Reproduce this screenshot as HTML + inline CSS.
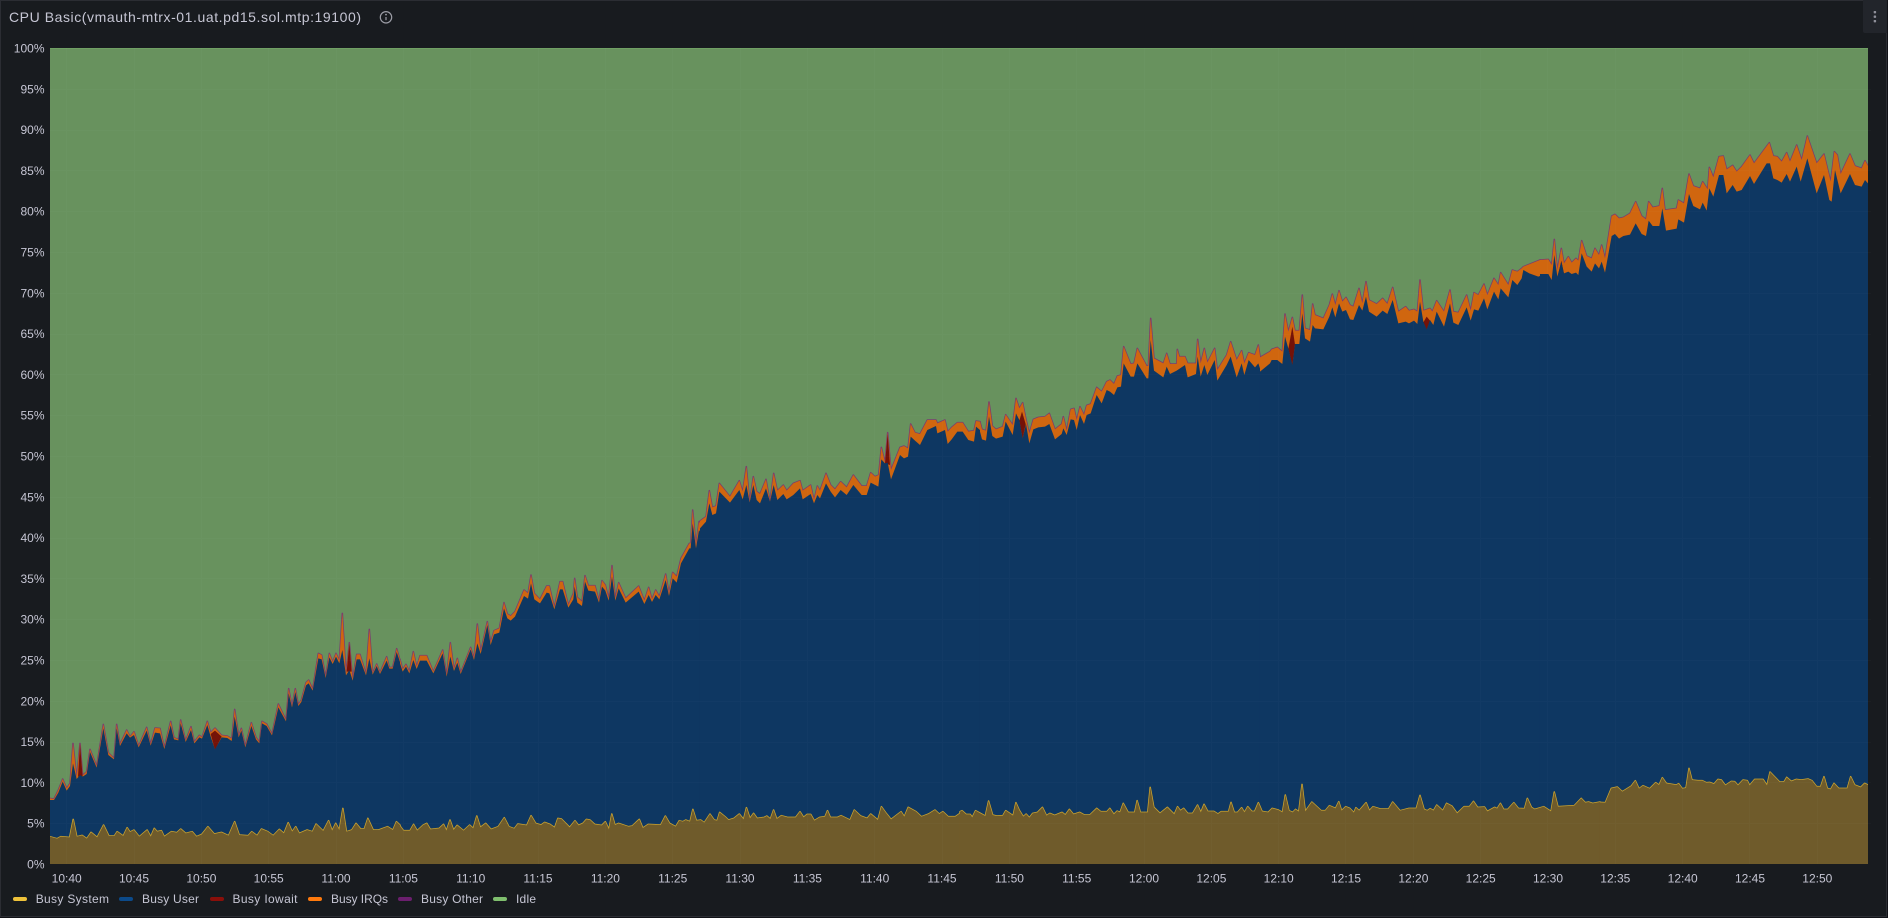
<!DOCTYPE html>
<html>
<head>
<meta charset="utf-8">
<style>
html,body{margin:0;padding:0;width:1888px;height:918px;overflow:hidden;background:#111217}
svg{display:block}
.v{vector-effect:non-scaling-stroke}
text{font-family:"Liberation Sans",sans-serif;fill:#c6c6d4;font-size:12px}
</style>
</head>
<body>
<svg width="1888" height="918" viewBox="0 0 1888 918" xmlns="http://www.w3.org/2000/svg">
<defs>
<clipPath id="plot"><rect x="50" y="48" width="1818" height="816"/></clipPath>
<polygon id="ta" class="v" transform="translate(40 600) scale(.33333)" points="30,840 30,595 42,597 55,570 68,537 80,565 90,550 99,430 110,533 120,430 128,526 140,515 150,448 170,498 190,373 205,458 222,475 230,373 240,433 260,390 270,410 282,395 296,438 320,382 332,433 345,384 360,385 373,443 392,364 402,413 415,418 422,360 437,422 453,380 463,426 478,406 486,412 502,364 512,398 525,384 545,406 562,408 575,416 584,328 596,408 604,385 616,438 634,368 648,412 658,426 666,364 680,372 696,402 715,312 738,360 746,266 756,318 766,266 775,314 784,300 798,248 806,240 818,268 835,160 845,165 857,230 868,160 878,186 888,160 898,182 907,40 918,222 928,128 938,238 950,163 960,163 978,222 988,88 998,220 1010,192 1020,218 1040,170 1048,202 1058,202 1070,146 1080,180 1080,840"/>
<polygon id="tb" class="v" transform="translate(400 510) scale(.33333)" points="0,1110 0,448 8,478 18,463 28,485 40,425 50,470 60,437 80,437 100,485 128,420 140,495 151,398 162,478 172,445 182,488 212,412 222,445 232,342 242,425 262,335 272,398 282,362 298,355 312,278 322,312 332,318 345,305 372,240 384,250 393,195 403,250 420,268 440,228 448,228 463,292 480,215 488,215 505,285 520,250 524,205 532,262 546,275 555,197 565,227 585,227 597,272 606,212 616,225 626,265 636,167 646,265 656,218 677,265 716,228 733,272 746,232 756,268 767,240 778,260 797,192 807,250 818,187 830,200 843,145 868,100 872,100 878,0 888,105 897,35 900,40 900,1110"/>
<polygon id="tc" class="v" transform="translate(680 420) scale(.33333)" points="60,1380 60,303 78,290 88,212 97,262 108,258 118,190 150,230 178,182 188,215 199,140 209,245 220,170 230,215 240,222 258,178 270,245 281,160 292,212 310,195 320,212 340,190 360,182 368,212 392,195 402,240 412,198 420,212 438,160 452,195 465,208 482,185 500,202 520,165 545,198 560,198 572,158 585,170 596,165 604,82 615,128 623,38 633,150 660,82 672,78 684,85 692,12 705,38 720,42 742,0 768,0 772,10 795,0 803,35 815,22 832,8 848,8 865,35 882,32 888,3 900,5 900,1380"/>
<polygon id="td" class="v" transform="translate(960 300) scale(.33333)" points="60,1740 60,365 66,388 78,392 87,306 97,378 108,388 128,380 137,344 158,375 168,295 178,325 188,308 198,358 208,400 220,358 235,352 255,350 268,340 285,388 305,372 310,350 320,392 332,328 342,325 350,360 360,320 372,345 380,316 392,312 410,262 425,275 440,245 450,240 462,252 472,228 483,225 491,140 512,192 522,190 532,145 560,198 565,198 572,55 582,175 610,190 620,160 630,192 650,192 652,148 658,170 675,170 683,190 708,190 713,118 722,190 733,145 742,188 764,145 772,210 800,165 812,125 830,180 845,152 853,190 866,158 885,165 895,135 900,168 900,1740"/>
<polygon id="te" class="v" transform="translate(1260 270) scale(.33333)" points="0,1830 0,262 30,245 35,238 52,232 67,245 75,132 85,185 97,142 105,182 118,182 127,75 135,175 150,180 158,102 165,135 190,145 208,105 217,72 226,105 237,62 247,95 258,82 270,105 280,110 297,55 307,100 318,35 327,90 350,102 368,85 382,102 398,52 415,125 437,110 447,122 462,118 472,125 480,30 490,122 510,115 517,125 530,92 552,125 570,60 580,125 595,128 620,75 632,122 642,68 655,75 672,42 682,75 702,25 715,45 722,8 745,45 757,0 772,5 785,-5 790,-10 840,-30 840,1830"/>
<polygon id="tf" class="v" transform="translate(1540 130) scale(.33333)" points="0,2250 0,390 25,388 35,405 43,328 52,420 64,355 72,400 85,380 95,398 108,385 115,392 125,332 140,378 155,385 165,355 177,375 185,345 195,385 215,258 225,253 237,265 250,262 270,250 287,215 305,258 318,268 326,215 338,232 358,228 367,175 375,240 410,235 415,210 432,220 447,132 460,168 480,175 488,155 503,178 508,112 520,142 537,80 550,78 560,118 578,106 590,125 605,110 630,75 642,100 688,38 700,78 712,80 725,95 740,68 750,95 770,45 785,90 802,18 830,100 852,72 872,155 883,65 892,75 902,132 930,72 945,108 965,115 975,92 984,108 984,2250"/>
<polygon id="s1" class="v" transform="translate(0 780) scale(.35714 .33333)" points="140,300 140,170 160,176 170,170 195,172 205,118 215,170 230,166 243,176 255,157 272,172 290,135 305,168 320,168 328,155 345,168 356,143 364,156 375,150 390,170 412,150 422,170 432,145 440,155 452,152 460,170 480,155 495,158 506,147 520,160 538,155 550,170 565,163 582,140 600,162 620,157 640,167 657,125 670,165 695,167 705,155 720,167 732,147 750,155 765,167 782,148 795,160 807,128 818,155 828,140 838,160 860,150 875,155 885,132 905,153 920,122 930,152 940,130 950,150 960,85 970,155 985,150 997,130 1010,147 1020,147 1030,115 1045,150 1060,150 1085,140 1100,150 1110,125 1120,135 1120,300"/>
<polygon id="s2" class="v" transform="translate(400 790) scale(.35714 .33333)" points="0,270 0,108 10,122 28,122 38,103 48,122 65,105 75,100 85,118 110,115 122,103 130,122 140,90 150,120 160,106 178,122 195,105 205,115 215,78 225,112 240,100 255,118 275,110 292,83 305,110 320,116 330,102 355,106 367,77 380,100 395,105 405,97 420,103 433,113 442,85 452,87 475,112 490,92 500,106 512,100 522,88 532,90 545,103 565,106 575,95 585,118 593,72 602,105 612,100 640,110 650,108 670,88 680,114 695,103 730,105 743,78 755,100 772,110 782,92 792,95 800,90 812,95 820,58 830,92 842,90 852,98 868,72 880,90 888,92 895,67 910,80 920,90 935,85 950,72 962,88 970,53 980,85 990,70 1000,85 1020,82 1027,78 1037,87 1046,60 1055,87 1068,77 1085,82 1108,82 1120,65 1130,82 1140,73 1150,73 1160,92 1175,82 1190,80 1197,62 1205,82 1225,82 1235,77 1260,90 1272,60 1290,78 1308,85 1318,72 1338,90 1348,50 1360,68 1375,88 1403,65 1412,80 1423,52 1445,65 1460,80 1480,72 1498,60 1510,72 1520,65 1535,80 1555,80 1568,70 1568,270"/>
<polygon id="s3" class="v" transform="translate(960 770) scale(.40816 .33333)" points="0,330 0,125 5,122 15,133 25,133 30,142 38,122 50,130 62,138 70,93 80,135 90,138 105,137 112,122 130,137 137,98 145,120 155,140 162,132 170,143 178,130 190,127 202,112 212,137 220,130 232,136 250,127 258,135 268,118 278,133 293,127 305,135 318,135 335,115 345,125 360,125 367,115 377,133 385,123 392,127 400,100 412,127 428,127 434,92 442,127 460,127 466,52 475,112 490,130 508,112 525,133 533,110 540,122 548,115 558,130 570,130 582,105 590,127 598,103 607,124 622,124 632,132 640,125 658,125 664,97 672,127 680,127 690,113 697,127 705,110 715,124 722,124 731,98 740,124 755,127 765,115 780,120 790,127 797,75 806,122 815,127 822,118 830,125 838,43 846,124 862,96 885,122 895,122 905,107 920,115 928,95 935,122 945,110 955,115 965,128 970,113 978,122 995,98 1003,122 1012,110 1030,117 1050,117 1060,96 1078,122 1100,115 1118,115 1127,76 1137,118 1145,122 1152,116 1160,122 1168,105 1183,122 1192,100 1205,108 1218,130 1235,110 1248,110 1258,94 1268,112 1285,111 1292,124 1310,112 1316,116 1324,100 1332,118 1342,118 1357,98 1368,115 1383,116 1390,85 1400,112 1408,118 1430,110 1448,124 1456,66 1465,110 1505,107 1522,85 1532,98 1540,96 1550,100 1568,96 1568,330"/>
<polygon id="s4" class="v" transform="translate(1588 740) scale(.33333)" points="36,420 36,187 52,188 70,145 88,141 103,155 130,138 142,122 153,146 165,137 185,146 203,128 213,135 223,113 235,130 265,135 272,131 283,146 294,144 303,85 312,120 330,122 343,122 355,128 365,127 378,132 390,118 400,120 412,136 430,124 440,125 450,136 465,120 478,122 485,136 500,118 525,118 537,136 546,96 575,126 588,126 596,112 610,124 625,118 640,120 660,117 672,122 686,140 698,140 708,110 718,145 728,148 738,130 752,145 778,145 788,110 800,135 818,142 830,130 840,135 840,420"/>
</defs>

<rect x="0.5" y="0.5" width="1886" height="916" fill="#181b1f" stroke="#2b2d33"/>

<g clip-path="url(#plot)">
<rect x="50" y="48" width="1818" height="816" fill="#68925e"/>
<rect x="50" y="48" width="1818" height="1" fill="#70a064"/>

<g fill="none" stroke="#7a3c70" stroke-width="1.5" stroke-linejoin="round">
<use href="#ta"/><use href="#tb"/><use href="#tc"/><use href="#td"/><use href="#te"/><use href="#tf"/>
</g>
<g fill="#d0660f">
<use href="#ta"/><use href="#tb"/><use href="#tc"/><use href="#td"/><use href="#te"/><use href="#tf"/>
</g>

<g fill="#741208">
<polygon transform="translate(40 600) scale(.33333)" points="114,530 120,432 128,530"/>
<polygon transform="translate(40 600) scale(.33333)" points="512,402 525,392 545,410 525,450"/>
<polygon transform="translate(40 600) scale(.33333)" points="920,215 928,130 935,215"/>
<polygon transform="translate(680 420) scale(.33333)" points="615,130 623,42 630,135"/>
<polygon transform="translate(960 300) scale(.33333)" points="178,362 186,335 197,372 188,416"/>
<polygon transform="translate(1260 270) scale(.33333)" points="85,237 97,170 105,224 97,287"/>
<polygon transform="translate(1260 270) scale(.33333)" points="490,157 500,140 510,152 500,180"/>
<polygon transform="translate(1540 130) scale(.33333)" points="55,432 64,392 72,432"/>
</g>

<g fill="#0e3762">
<polygon transform="translate(40 600) scale(.33333)" points="30,840 30,600 42,600 55,578 68,545 80,572 90,558 99,490 110,537 120,525 128,530 140,522 150,456 170,503 190,385 205,465 222,478 230,385 240,438 260,400 270,413 282,405 296,442 320,392 332,437 345,398 360,400 373,447 392,376 402,418 415,421 422,370 437,426 453,390 463,430 478,412 486,416 502,375 512,410 525,448 545,412 562,414 575,423 584,350 596,412 604,392 616,442 634,378 648,418 658,430 666,370 680,378 696,406 715,322 738,364 746,280 756,322 766,276 775,318 784,306 798,256 806,250 818,272 835,175 845,178 857,234 868,172 878,192 888,170 898,190 907,150 918,226 928,210 938,242 950,178 960,178 978,226 988,175 998,224 1010,198 1020,222 1040,182 1048,206 1058,206 1070,156 1080,186 1080,840"/>
<polygon transform="translate(400 510) scale(.33333)" points="0,1110 0,460 8,485 18,470 28,490 40,450 50,477 60,452 80,452 100,490 128,430 140,500 151,440 162,483 172,458 182,492 212,418 222,450 232,400 242,432 262,345 272,405 282,373 298,368 312,295 322,325 332,332 345,320 372,258 384,266 393,220 403,268 420,280 440,248 448,250 463,298 480,238 488,238 505,293 520,268 524,230 532,278 546,288 555,215 565,242 585,245 597,278 606,230 616,242 626,272 636,200 646,272 656,235 677,278 716,245 733,282 746,255 756,276 767,255 778,268 797,210 807,258 818,205 830,218 843,160 868,115 872,115 878,40 888,115 897,60 900,65 900,1110"/>
<polygon transform="translate(680 420) scale(.33333)" points="60,1380 60,325 78,305 88,250 97,285 108,280 118,215 150,248 178,210 188,238 199,195 209,247 220,195 230,240 240,250 258,205 270,245 281,195 292,240 310,222 320,238 340,225 360,205 368,238 392,222 402,250 412,225 420,235 438,190 452,215 465,232 482,210 500,225 520,195 545,225 560,225 572,188 595,200 604,118 615,130 623,128 633,178 660,105 672,115 684,110 692,50 705,62 720,75 742,30 768,18 772,40 795,30 803,72 815,58 832,35 848,35 865,60 882,65 888,20 900,30 900,1380"/>
<polygon transform="translate(960 300) scale(.33333)" points="60,1740 60,395 66,418 78,422 87,350 97,408 108,416 128,410 137,365 158,405 168,340 178,360 188,415 198,372 208,430 220,388 235,382 255,380 268,372 285,418 305,402 310,385 320,405 332,358 342,360 350,390 360,345 372,372 380,345 392,340 410,285 425,310 440,270 450,275 462,285 472,262 483,260 491,190 512,230 522,230 532,190 560,235 565,235 572,120 582,212 610,232 620,200 630,222 650,212 660,205 675,195 683,232 708,222 713,170 722,230 733,195 742,225 764,180 772,242 800,195 812,170 830,232 845,190 853,225 866,180 885,202 895,190 900,205 900,1740"/>
<polygon transform="translate(1260 270) scale(.33333)" points="0,1830 0,305 30,280 35,270 52,270 67,282 75,200 85,235 97,285 105,222 118,222 127,130 135,205 150,215 158,165 165,175 190,178 208,140 217,112 226,142 237,100 247,125 258,120 270,148 280,150 297,105 307,122 318,80 327,125 350,140 368,122 382,132 398,90 415,160 437,155 447,160 462,152 472,162 480,95 490,155 500,178 510,150 520,165 530,125 552,170 570,100 580,158 595,165 620,112 632,152 642,118 655,122 672,85 682,118 702,65 715,88 722,55 745,82 757,30 772,45 785,25 790,0 808,10 835,20 840,18 840,1830"/>
<polygon transform="translate(1540 130) scale(.33333)" points="0,2250 0,432 25,432 35,450 43,375 52,440 64,395 72,430 85,425 95,432 108,428 115,435 125,370 140,410 155,425 165,400 177,415 185,395 195,428 215,318 225,312 237,326 250,318 270,314 287,280 305,312 318,318 326,272 338,288 358,288 367,235 378,302 410,296 415,268 432,278 447,192 460,228 480,238 488,218 500,242 508,175 520,200 537,135 550,135 560,190 578,165 590,185 605,180 630,138 642,162 680,100 690,100 700,145 712,150 725,158 740,132 750,155 770,110 782,155 802,85 830,190 852,135 868,210 875,215 885,120 902,190 930,132 945,165 965,170 975,150 984,160 984,2250"/>
</g>

<g fill="none" stroke="#c9a22f" stroke-width="1.5" stroke-linejoin="round">
<use href="#s1"/><use href="#s2"/><use href="#s3"/><use href="#s4"/>
</g>
<g fill="#6f5b2b">
<use href="#s1"/><use href="#s2"/><use href="#s3"/><use href="#s4"/>
</g>
</g>

<path stroke="#ffffff" stroke-opacity=".02" fill="none" d="M66.5 48V864M134.5 48V864M201.5 48V864M268.5 48V864M336.5 48V864M403.5 48V864M470.5 48V864M538.5 48V864M605.5 48V864M672.5 48V864M740.5 48V864M807.5 48V864M874.5 48V864M942.5 48V864M1009.5 48V864M1076.5 48V864M1144.5 48V864M1211.5 48V864M1278.5 48V864M1345.5 48V864M1413.5 48V864M1480.5 48V864M1547.5 48V864M1615.5 48V864M1682.5 48V864M1749.5 48V864M1817.5 48V864
M50 89.5H1871M50 130.5H1871M50 170.5H1871M50 211.5H1871M50 252.5H1871M50 293.5H1871M50 334.5H1871M50 374.5H1871M50 415.5H1871M50 456.5H1871M50 497.5H1871M50 538.5H1871M50 578.5H1871M50 619.5H1871M50 660.5H1871M50 701.5H1871M50 742.5H1871M50 782.5H1871M50 823.5H1871"/>

<text x="9" y="22" style="font-size:14px" textLength="352" lengthAdjust="spacing">CPU Basic(vmauth-mtrx-01.uat.pd15.sol.mtp:19100)</text>

<g fill="none" stroke="#9b9ca5" stroke-width="1.2">
<circle cx="386" cy="17.3" r="5.7"/>
<path d="M386 17v3.2"/>
</g>
<circle cx="386" cy="14.6" r=".9" fill="#9b9ca5"/>

<path d="M1863 0H1887V33H1865a2 2 0 0 1-2-2Z" fill="#22252b"/>
<g fill="#8f909a">
<rect x="1873.7" y="11" width="2.4" height="2.4" rx=".6"/>
<rect x="1873.7" y="15.5" width="2.4" height="2.4" rx=".6"/>
<rect x="1873.7" y="20" width="2.4" height="2.4" rx=".6"/>
</g>

<g text-anchor="end">
<text x="44.5" y="52.5">100%</text>
<text x="44.5" y="93.3">95%</text>
<text x="44.5" y="134.1">90%</text>
<text x="44.5" y="174.9">85%</text>
<text x="44.5" y="215.7">80%</text>
<text x="44.5" y="256.5">75%</text>
<text x="44.5" y="297.3">70%</text>
<text x="44.5" y="338.1">65%</text>
<text x="44.5" y="378.9">60%</text>
<text x="44.5" y="419.7">55%</text>
<text x="44.5" y="460.5">50%</text>
<text x="44.5" y="501.3">45%</text>
<text x="44.5" y="542.1">40%</text>
<text x="44.5" y="582.9">35%</text>
<text x="44.5" y="623.7">30%</text>
<text x="44.5" y="664.5">25%</text>
<text x="44.5" y="705.3">20%</text>
<text x="44.5" y="746.1">15%</text>
<text x="44.5" y="786.9">10%</text>
<text x="44.5" y="827.7">5%</text>
<text x="44.5" y="868.5">0%</text>
</g>

<g text-anchor="middle">
<text x="66.7" y="882.5">10:40</text>
<text x="134" y="882.5">10:45</text>
<text x="201.4" y="882.5">10:50</text>
<text x="268.7" y="882.5">10:55</text>
<text x="336" y="882.5">11:00</text>
<text x="403.4" y="882.5">11:05</text>
<text x="470.7" y="882.5">11:10</text>
<text x="538" y="882.5">11:15</text>
<text x="605.4" y="882.5">11:20</text>
<text x="672.7" y="882.5">11:25</text>
<text x="740" y="882.5">11:30</text>
<text x="807.4" y="882.5">11:35</text>
<text x="874.7" y="882.5">11:40</text>
<text x="942" y="882.5">11:45</text>
<text x="1009.4" y="882.5">11:50</text>
<text x="1076.7" y="882.5">11:55</text>
<text x="1144" y="882.5">12:00</text>
<text x="1211.4" y="882.5">12:05</text>
<text x="1278.7" y="882.5">12:10</text>
<text x="1346" y="882.5">12:15</text>
<text x="1413.4" y="882.5">12:20</text>
<text x="1480.7" y="882.5">12:25</text>
<text x="1548" y="882.5">12:30</text>
<text x="1615.3" y="882.5">12:35</text>
<text x="1682.7" y="882.5">12:40</text>
<text x="1750" y="882.5">12:45</text>
<text x="1817.3" y="882.5">12:50</text>
</g>

<rect x="13" y="897" width="14" height="4" rx="2" fill="#eec23a"/>
<text x="35.7" y="903.2" textLength="73.3" lengthAdjust="spacing">Busy System</text>
<rect x="119" y="897" width="14" height="4" rx="2" fill="#0c4a8a"/>
<text x="142" y="903.2" textLength="57" lengthAdjust="spacing">Busy User</text>
<rect x="210" y="897" width="14" height="4" rx="2" fill="#8a0f0a"/>
<text x="232.5" y="903.2" textLength="65" lengthAdjust="spacing">Busy Iowait</text>
<rect x="308" y="897" width="14" height="4" rx="2" fill="#ff7a0d"/>
<text x="331" y="903.2" textLength="57" lengthAdjust="spacing">Busy IRQs</text>
<rect x="398" y="897" width="14" height="4" rx="2" fill="#6b1f6e"/>
<text x="421" y="903.2" textLength="62" lengthAdjust="spacing">Busy Other</text>
<rect x="493" y="897" width="14" height="4" rx="2" fill="#7fbf6e"/>
<text x="516" y="903.2" textLength="20" lengthAdjust="spacing">Idle</text>
</svg>
</body>
</html>
